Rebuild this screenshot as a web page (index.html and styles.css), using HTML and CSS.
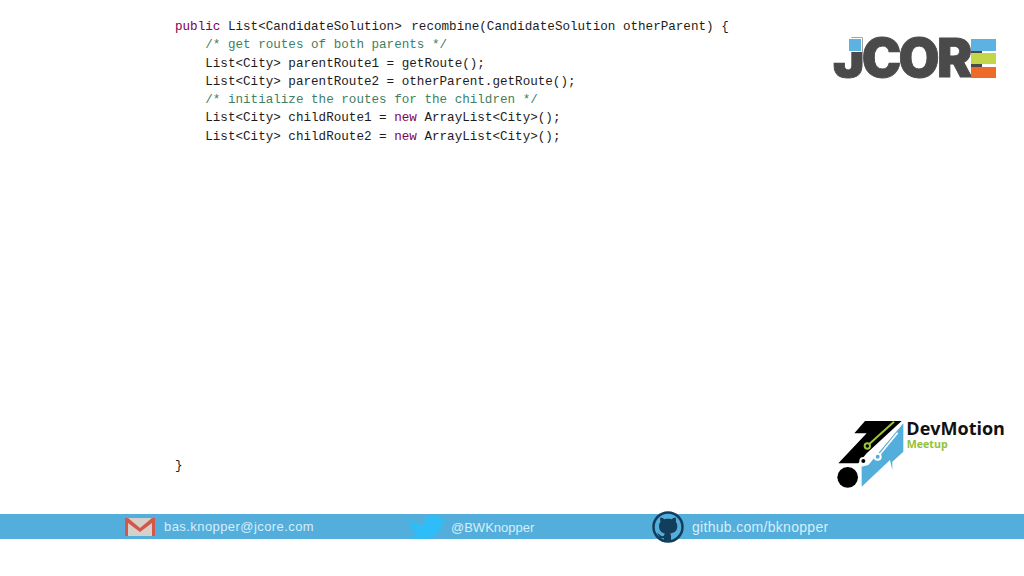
FILE: index.html
```html
<!DOCTYPE html>
<html lang="en">
<head>
<meta charset="utf-8">
<title>Recombine</title>
<link rel="stylesheet" href="styles.css">
</head>
<body>
<main class="slide">
<pre class="code"><span class="kw">public</span> List&lt;CandidateSolution&gt; <span class="method">recombine(CandidateSolution otherParent) {</span>
    <span class="cm">/* get routes of both parents */</span>
    List&lt;City&gt; parentRoute1 = getRoute();
    List&lt;City&gt; parentRoute2 = otherParent.getRoute();
    <span class="cm">/* initialize the routes for the children */</span>
    List&lt;City&gt; childRoute1 = <span class="kw">new</span> ArrayList&lt;City&gt;();
    List&lt;City&gt; childRoute2 = <span class="kw">new</span> ArrayList&lt;City&gt;();

















}</pre>
<aside class="logos">
<div class="jcore">
<span class="jcore-dot"></span>
<span class="jcore-word">JCOR</span>
<span class="jcore-bars"><i class="bar bar-blue"></i><i class="bar bar-green"></i><i class="bar bar-orange"></i></span>
</div>
<svg class="devmotion" viewBox="0 0 540 255" width="180" height="85" role="img" aria-label="DevMotion Meetup">
<polygon class="dm-black" points="105,33 215,33 110,130 85,160 25,160 110,70 73,70"/>
<line class="dm-green" x1="192" y1="35" x2="118" y2="102"/>
<circle class="dm-green-ring" cx="112" cy="108" r="8"/>
<polygon class="dm-blue" points="220,40 220,125 187,155 187,180 180,150 95,230 95,170 115,165"/>
<line class="dm-white" x1="203" y1="68" x2="150" y2="133"/>
<circle class="dm-white-ring" cx="143" cy="140" r="9"/>
<circle class="dm-node" cx="100" cy="153" r="9"/>
<circle class="dm-ball" cx="53" cy="202" r="31"/>
<text class="dm-title" x="229" y="74">DevMotion</text>
<text class="dm-sub" x="230" y="114">Meetup</text>
</svg>
</aside>
</main>
<footer class="bar-footer">
<div class="contact contact-mail">
<svg class="ic" viewBox="0 0 32 20" width="32" height="20" aria-hidden="true">
<rect x="1" y="1" width="30" height="18" fill="#d5d0c8"/>
<path d="M1 19V1h3l12 10L28 1h3v18h-3V6L16 15 4 6v13z" fill="#d3574d"/>
</svg>
<span>bas.knopper@jcore.com</span>
</div>
<div class="contact contact-tw">
<svg class="ic" viewBox="0 0 42 24" width="42" height="24" aria-hidden="true">
<path d="M3 4.500C8 8 13 10 18.500 10 18 5 23 .5 28 .5c3 0 5 1 6.500 2.500L39 2l-2.500 3L42 6l-5 3c-1 8-8 15-19 15-6 0-11-1-16-3 5 0 8-1 10.500-3-3.500-1-6-2.500-7-5.500h3C5 11 3.500 8 3 4.500z" fill="#2ebdf6"/>
</svg>
<span>@BWKnopper</span>
</div>
<div class="contact contact-gh">
<svg class="ic" viewBox="0 0 32 32" width="32" height="32" aria-hidden="true">
<circle cx="16" cy="16" r="14.500" fill="#54aedb" stroke="#123e5c" stroke-width="2.500"/>
<path d="M8.500 6.500c1.500 0 3 1 4 1.800 2.200-.6 4.800-.6 7 0 1-.8 2.500-1.800 4-1.800.6 1.500.7 3 .3 4.200 1 1.200 1.500 2.600 1.500 4.300 0 5-3 7-7.300 7.500.8.700 1 1.700 1 3v4h-7v-2.300c-2.500.5-4.500-.3-5.500-2.700-.5-1-1-1.500-2-2 1.500-.3 2.800.3 3.500 1.500.8 1.200 2.200 1.500 4 .8 0-.8.300-1.700 1-2.300C9.900 22 7 20 7 15c0-1.700.5-3.100 1.500-4.300-.4-1.200-.6-2.700 0-4.200z" fill="#123e5c"/>
</svg>
<span>github.com/bknopper</span>
</div>
</footer>
</body>
</html>
```
FILE: styles.css
```css
html, body { margin: 0; padding: 0; background: #fff; }
body { width: 1024px; height: 576px; overflow: hidden; }

.slide { display: flex; justify-content: space-between; height: 514px; }

.code {
  margin: 0;
  padding: 18px 0 0 175px;
  font: 12.6px/18.3px "Liberation Mono", monospace;
  color: #1c1c1c;
}
.kw { color: #7f0055; }
.cm { color: #3f7f5f; }
.method { margin-left: 2px; }

.logos {
  display: flex;
  flex-direction: column;
  justify-content: space-between;
  align-items: flex-start;
  width: 194px;
  padding: 39px 0 19px;
}

.jcore { position: relative; display: flex; align-items: flex-start; height: 39px; margin-left: 3px; }
.jcore-word {
  font: 900 53px/39px Inter, sans-serif;
  letter-spacing: -2.800px;
  color: #4a4a4a;
  -webkit-text-stroke: .8px #4a4a4a;
}
.jcore-dot { position: absolute; left: 16px; top: 0; width: 12px; height: 12px; background: #5cb2e0; z-index: 1; box-shadow: 0 0 0 1px #fff; }
.jcore-bars {
  display: flex;
  flex-direction: column;
  justify-content: space-between;
  width: 25px;
  height: 39px;
  margin-left: 1px;
  background: linear-gradient(#4a4a4a, #4a4a4a) no-repeat left / 11px 100%;
}
.bar { display: block; height: 11.500px; }
.bar-blue { background: #5cb2e0; }
.bar-green { background: #c3d64a; }
.bar-orange { background: #ee6a28; }

.devmotion { display: block; }
.dm-black { fill: #000; }
.dm-blue { fill: #54aedb; }
.dm-green { stroke: #9cc43a; stroke-width: 6; }
.dm-green-ring { fill: #000; stroke: #9cc43a; stroke-width: 6; }
.dm-white { stroke: #fff; stroke-width: 5; }
.dm-white-ring { fill: #54aedb; stroke: #fff; stroke-width: 6; }
.dm-node { fill: #000; stroke: #fff; stroke-width: 6; }
.dm-ball { fill: #000; }
.dm-title { font: 700 54px "Open Sans", sans-serif; fill: #111; }
.dm-sub { font: 700 32px "Open Sans", sans-serif; fill: #94c13a; }

.bar-footer {
  display: grid;
  grid-template-columns: 281px 247px auto;
  height: 25px;
  padding-left: 124px;
  background: #54aedb;
  font: 14px/25px "Liberation Sans", sans-serif;
  color: #d5eefa;
}
.contact { display: flex; align-items: center; gap: 8px; height: 25px; }
.contact span { position: relative; top: 1px; }
.contact-mail span { top: 0; font-size: 13px; letter-spacing: .43px; }
.contact-tw { gap: 4px; }
.contact-tw span { font-size: 13px; }
.contact-gh span { letter-spacing: .3px; }
.ic { flex: none; }
```
